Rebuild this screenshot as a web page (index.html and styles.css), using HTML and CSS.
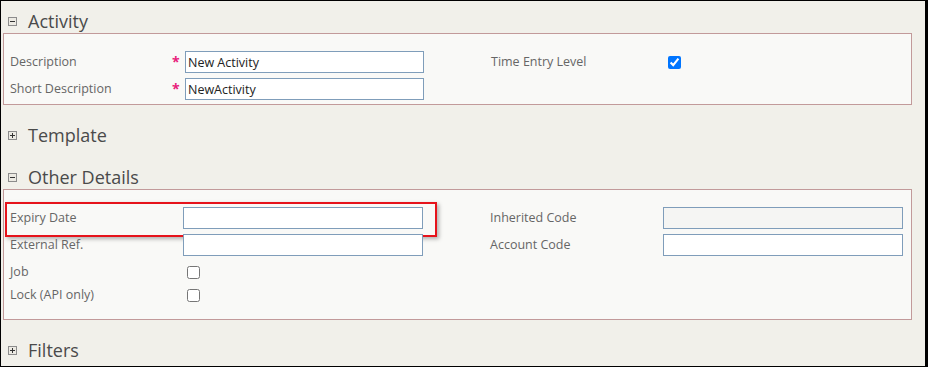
FILE: index.html
```html
<!DOCTYPE html>
<html lang="en">
<head>
  <meta charset="UTF-8">
  <title>Activity</title>
  <link rel="stylesheet" href="styles.css">
</head>
<body>
  <div class="frame">
    <!-- Activity -->
    <div class="section">
      <div class="section-head">
        <svg class="toggle" width="9" height="9" viewBox="0 0 9 9"><rect x="0.5" y="0.5" width="8" height="8" fill="#eceae3" stroke="#8c8c8c"/><path d="M2 4.5h5" stroke="#333" stroke-width="1"/></svg>
        <span>Activity</span>
      </div>
      <div class="panel">
        <div class="form-row req-row">
          <label>Description</label>
          <span class="req">*</span>
          <div class="cell"><input type="text" value="New Activity"></div>
          <label>Time Entry Level</label>
          <div class="cell"><input type="checkbox" checked></div>
        </div>
        <div class="form-row req-row">
          <label>Short Description</label>
          <span class="req">*</span>
          <div class="cell"><input type="text" value="NewActivity"></div>
        </div>
      </div>
    </div>

    <!-- Template -->
    <div class="section">
      <div class="section-head">
        <svg class="toggle" width="9" height="9" viewBox="0 0 9 9"><rect x="0.5" y="0.5" width="8" height="8" fill="#eceae3" stroke="#8c8c8c"/><path d="M2 4.5h5M4.5 2v5" stroke="#333" stroke-width="1"/></svg>
        <span>Template</span>
      </div>
    </div>

    <!-- Other Details -->
    <div class="section">
      <div class="section-head">
        <svg class="toggle" width="9" height="9" viewBox="0 0 9 9"><rect x="0.5" y="0.5" width="8" height="8" fill="#eceae3" stroke="#8c8c8c"/><path d="M2 4.5h5" stroke="#333" stroke-width="1"/></svg>
        <span>Other Details</span>
      </div>
      <div class="panel other">
        <div class="form-row highlighted">
          <label>Expiry Date</label>
          <div class="cell"><input type="text"></div>
          <label>Inherited Code</label>
          <div class="cell"><input type="text" class="disabled" readonly></div>
          <div class="callout"></div>
        </div>
        <div class="form-row">
          <label>External Ref.</label>
          <div class="cell"><input type="text"></div>
          <label>Account Code</label>
          <div class="cell"><input type="text"></div>
        </div>
        <div class="form-row check-row">
          <label>Job</label>
          <div class="cell"><input type="checkbox"></div>
        </div>
        <div class="form-row check-row">
          <label>Lock (API only)</label>
          <div class="cell"><input type="checkbox"></div>
        </div>
      </div>
    </div>

    <!-- Filters -->
    <div class="section">
      <div class="section-head">
        <svg class="toggle" width="9" height="9" viewBox="0 0 9 9"><rect x="0.5" y="0.5" width="8" height="8" fill="#eceae3" stroke="#8c8c8c"/><path d="M2 4.5h5M4.5 2v5" stroke="#333" stroke-width="1"/></svg>
        <span>Filters</span>
      </div>
    </div>
  </div>
</body>
</html>
```

FILE: styles.css
```css
/* Page frame */
body {
  margin: 0;
  font-family: "Open Sans", Arial, sans-serif;
}
.frame {
  box-sizing: border-box;
  width: 928px;
  height: 367px;
  border: 1px solid #000;
  border-right-width: 3px;
  background: #f1f0ea;
  padding: 8px 13px 0 2px;
  overflow: hidden;
}
/* Sections */
.section + .section {
  margin-top: 18px;
}
.section-head {
  display: flex;
  align-items: center;
  height: 24px;
  padding-left: 5px;
  color: #4a4a4a;
  font-size: 18px;
}
.toggle {
  margin-right: 11px;
  flex: none;
}
.panel {
  background: #f9f9f7;
  border: 1px solid #c29a9a;
  padding: 17px 6px 4px 6px;
}
.panel.other {
  padding-bottom: 15px;
}
/* Form rows */
.form-row {
  display: grid;
  grid-template-columns: 173px 307px 173px 240px;
  align-items: center;
  height: 22px;
  margin-bottom: 5px;
  position: relative;
}
.form-row:last-child {
  margin-bottom: 0;
}
.req-row {
  grid-template-columns: 161px 14px 306px 173px 240px;
}
.check-row {
  height: 20px;
  margin-bottom: 3px;
}
label {
  color: #666;
  font-size: 12.5px;
  line-height: 22px;
  white-space: nowrap;
}
.req {
  color: #e8207a;
  font-size: 14px;
  font-weight: bold;
  padding-left: 1px;
  line-height: 22px;
}
.cell {
  display: flex;
  align-items: center;
  height: 100%;
}
input[type="text"] {
  box-sizing: border-box;
  width: 240px;
  height: 22px;
  margin: 0;
  padding: 0 2px;
  border: 1px solid #7f9dba;
  border-radius: 0;
  background: #fff;
  color: #222;
  font-family: "Open Sans", Arial, sans-serif;
  font-size: 12.5px;
  outline: none;
}
.req-row input[type="text"] {
  width: 239px;
}
input.disabled {
  background: #f5f5f3;
}
input[type="checkbox"] {
  width: 13px;
  height: 13px;
  margin: 0 0 0 4px;
}
/* Red callout around the Expiry Date row */
.callout {
  position: absolute;
  left: -5px;
  top: -5px;
  width: 428px;
  height: 31px;
  border: 2px solid #e6131b;
  box-shadow: 2px 2px 4px rgba(0, 0, 0, 0.3);
  pointer-events: none;
}
```
